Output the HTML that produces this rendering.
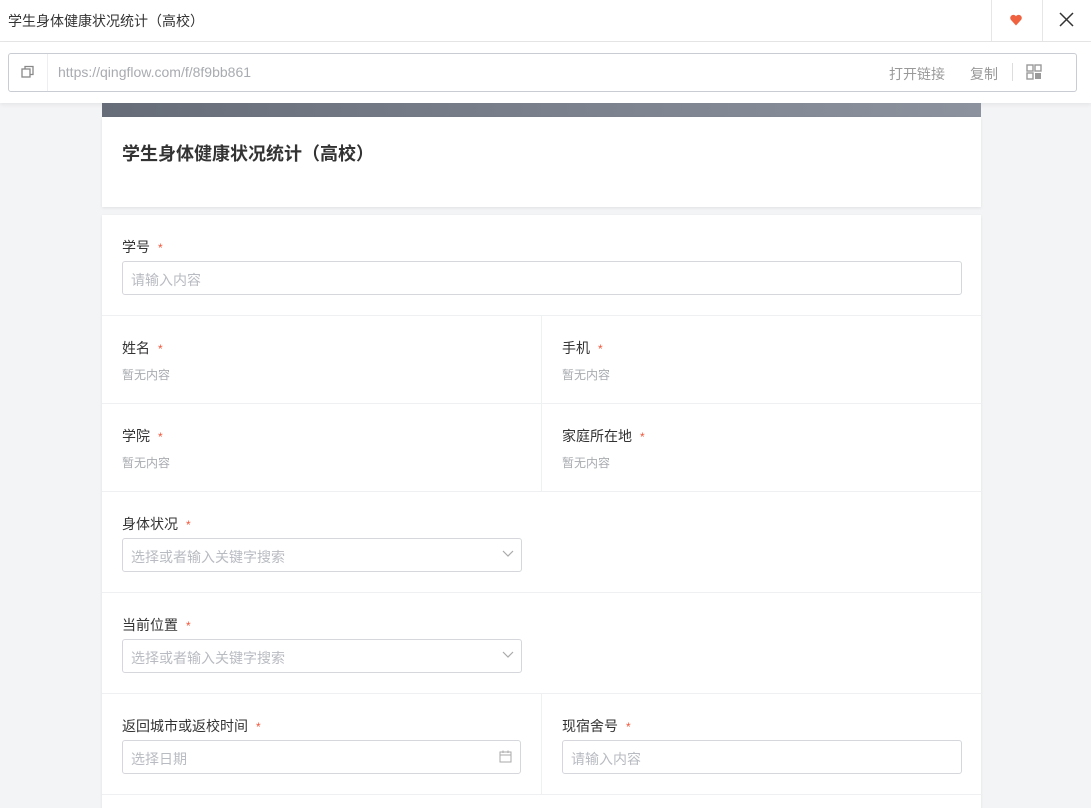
<!DOCTYPE html><html><head><meta charset="utf-8"><style>
*{box-sizing:border-box;margin:0;padding:0}
body{width:1091px;height:808px;overflow:hidden;background:#f3f4f6;font-family:"Liberation Sans","Noto Sans CJK SC",sans-serif;color:#333;position:relative}
.a{position:absolute}
.top{left:0;top:0;width:1091px;height:42px;background:#fff;border-bottom:1px solid #e6e6e6}
.lb{left:0;top:42px;width:1091px;height:61px;background:#fff;box-shadow:0 2px 4px rgba(0,0,0,.06)}
.box{left:8px;top:53px;width:1069px;height:39px;border:1px solid #c9ccd2;border-radius:3px;background:#fff}
.lbl{font-size:14px;color:#333}
.lbl i{color:#f0563a;font-style:normal;margin-left:8px;font-size:12px}
.in{border:1px solid #d5d7dc;border-radius:3px;height:34px;font-size:14px;color:#b8bbc1;padding:8px 8px;background:#fff}
.nc{font-size:12px;color:#a8abb0}
.hl{height:1px;background:#eef0f2;left:102px;width:879px}
</style></head><body>
<div class="a top"></div>
<div class="a" style="left:8px;top:11px;font-size:14px;color:#333">学生身体健康状况统计（高校）</div>
<div class="a" style="left:991px;top:0;width:1px;height:41px;background:#e6e6e6"></div>
<div class="a" style="left:1042px;top:0;width:1px;height:41px;background:#e6e6e6"></div>
<svg class="a" style="left:1009px;top:13px" width="14" height="14" viewBox="0 0 14 14"><path d="M7 12.5 L1.8 6.8 A3 3 0 0 1 7 3.2 A3 3 0 0 1 12.2 6.8Z" fill="#f0613f"/></svg>
<svg class="a" style="left:1059px;top:12px" width="15" height="15" viewBox="0 0 15 15"><path d="M1 1L14 14M14 1L1 14" stroke="#333" stroke-width="1.5"/></svg>
<div class="a lb"></div>
<div class="a box"></div>
<div class="a" style="left:47px;top:54px;width:1px;height:37px;background:#eceef1"></div>
<svg class="a" style="left:21px;top:65px" width="14" height="14" viewBox="0 0 14 14"><rect x="1" y="4" width="8" height="8" fill="none" stroke="#888" stroke-width="1.3"/><path d="M4 4V1.5H12V9.5H9" fill="none" stroke="#888" stroke-width="1.3"/></svg>
<div class="a" style="left:58px;top:64px;font-size:14px;color:#a8abb0">https://qingflow.com/f/8f9bb861</div>
<div class="a" style="left:889px;top:64px;font-size:14px;color:#999">打开链接</div>
<div class="a" style="left:970px;top:64px;font-size:14px;color:#999">复制</div>
<div class="a" style="left:1012px;top:63px;width:1px;height:18px;background:#ddd"></div>
<svg class="a" style="left:1026px;top:64px" width="16" height="16" viewBox="0 0 16 16"><rect x="1" y="1" width="6" height="6" fill="none" stroke="#999" stroke-width="1.4"/><rect x="9" y="1" width="6" height="6" fill="none" stroke="#999" stroke-width="1.4"/><rect x="1" y="9" width="6" height="6" fill="none" stroke="#999" stroke-width="1.4"/><rect x="9" y="9" width="6" height="6" fill="#999"/></svg>
<div class="a" style="left:102px;top:103px;width:879px;height:14px;background:linear-gradient(90deg,#666d79,#8d939e)"></div>
<div class="a" style="left:102px;top:117px;width:879px;height:90px;background:#fff;box-shadow:0 1px 3px rgba(0,0,0,.08)"></div>
<div class="a" style="left:122px;top:140px;font-size:18px;color:#333;font-weight:bold">学生身体健康状况统计（高校）</div>
<div class="a" style="left:102px;top:215px;width:879px;height:593px;background:#fff;box-shadow:0 1px 3px rgba(0,0,0,.08)"></div>
<div class="a lbl" style="left:122px;top:237px">学号<i>*</i></div>
<div class="a in" style="left:122px;top:261px;width:840px">请输入内容</div>
<div class="a hl" style="top:315px"></div>
<div class="a lbl" style="left:122px;top:338px">姓名<i>*</i></div>
<div class="a nc" style="left:122px;top:366px">暂无内容</div>
<div class="a lbl" style="left:562px;top:338px">手机<i>*</i></div>
<div class="a nc" style="left:562px;top:366px">暂无内容</div>
<div class="a hl" style="top:403px"></div>
<div class="a lbl" style="left:122px;top:426px">学院<i>*</i></div>
<div class="a nc" style="left:122px;top:454px">暂无内容</div>
<div class="a lbl" style="left:562px;top:426px">家庭所在地<i>*</i></div>
<div class="a nc" style="left:562px;top:454px">暂无内容</div>
<div class="a" style="left:541px;top:315px;width:1px;height:176px;background:#eef0f2"></div>
<div class="a hl" style="top:491px"></div>
<div class="a lbl" style="left:122px;top:514px">身体状况<i>*</i></div>
<div class="a in" style="left:122px;top:538px;width:400px">选择或者输入关键字搜索</div>
<svg class="a" style="left:502px;top:550px" width="12" height="8" viewBox="0 0 12 8"><path d="M1 1L6 6L11 1" fill="none" stroke="#aaa" stroke-width="1.2"/></svg>
<div class="a hl" style="top:592px"></div>
<div class="a lbl" style="left:122px;top:615px">当前位置<i>*</i></div>
<div class="a in" style="left:122px;top:639px;width:400px">选择或者输入关键字搜索</div>
<svg class="a" style="left:502px;top:651px" width="12" height="8" viewBox="0 0 12 8"><path d="M1 1L6 6L11 1" fill="none" stroke="#aaa" stroke-width="1.2"/></svg>
<div class="a hl" style="top:693px"></div>
<div class="a lbl" style="left:122px;top:716px">返回城市或返校时间<i>*</i></div>
<div class="a in" style="left:122px;top:740px;width:399px">选择日期</div>
<svg class="a" style="left:499px;top:750px" width="13" height="13" viewBox="0 0 13 13"><rect x="1" y="2" width="11" height="10" fill="none" stroke="#aaa"/><path d="M1 5H12M4 0.5V3M9 0.5V3" stroke="#aaa"/></svg>
<div class="a lbl" style="left:562px;top:716px">现宿舍号<i>*</i></div>
<div class="a in" style="left:562px;top:740px;width:400px">请输入内容</div>
<div class="a" style="left:541px;top:693px;width:1px;height:101px;background:#eef0f2"></div>
<div class="a hl" style="top:794px"></div>
</body></html>
